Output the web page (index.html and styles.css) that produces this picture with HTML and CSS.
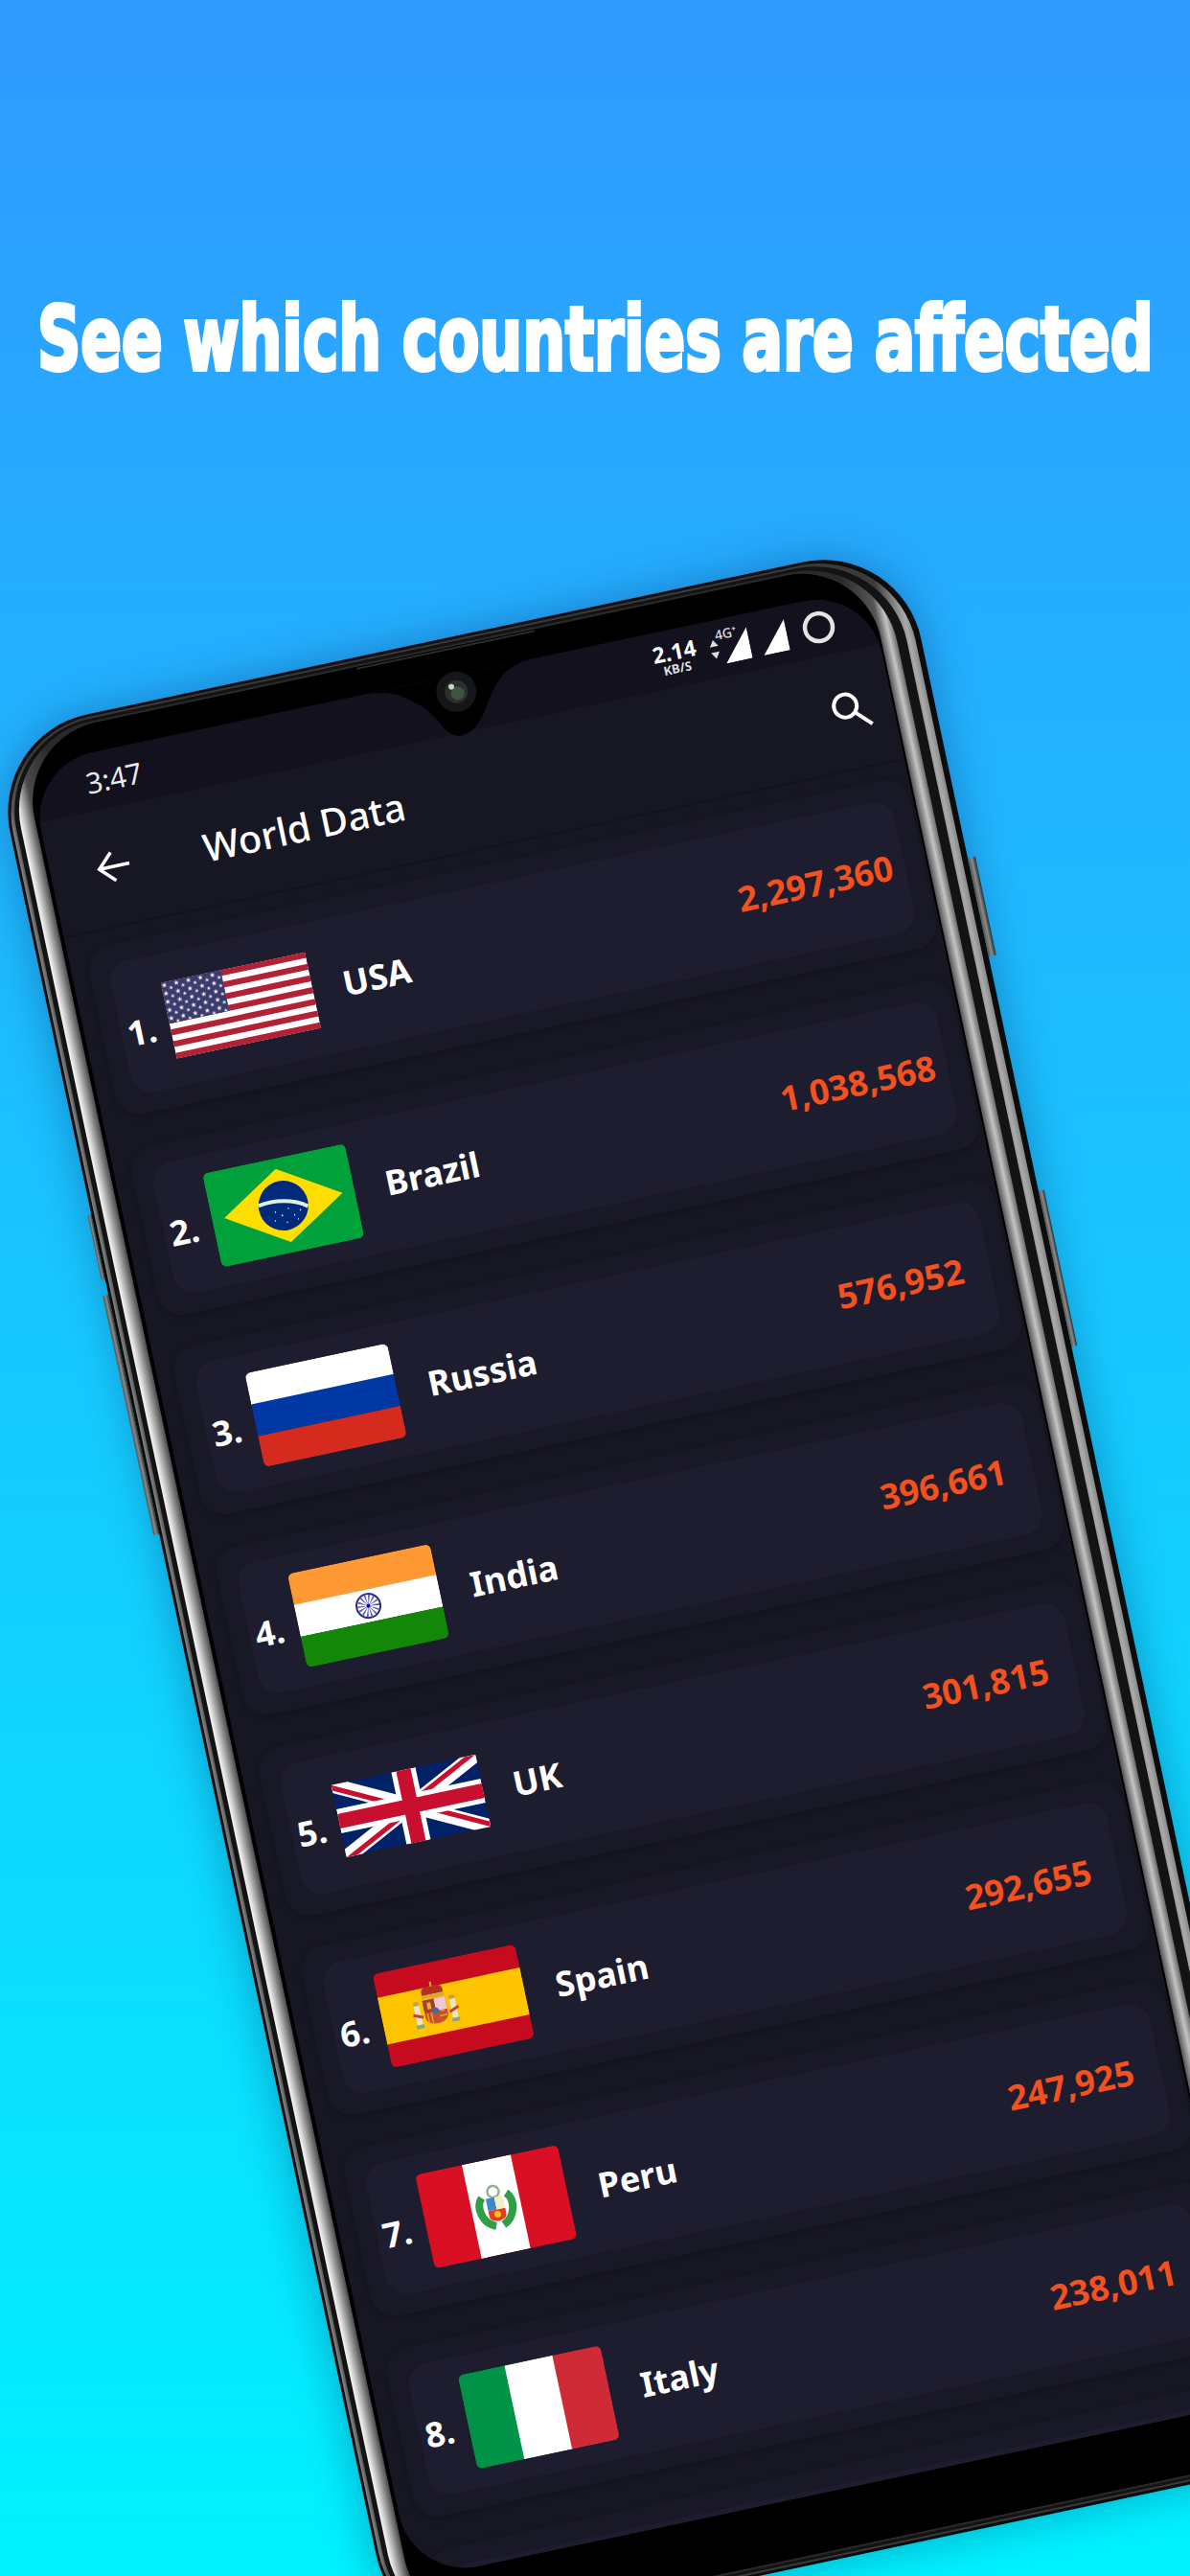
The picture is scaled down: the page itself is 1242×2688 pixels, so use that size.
FILE: index.html
```html
<!DOCTYPE html>
<html lang="en">
<head>
  <meta charset="UTF-8">
  <title>World Data</title>
  <link rel="stylesheet" href="styles.css">
</head>
<body>
  <header class="promo">
    <h1 class="promo-title">See which countries are affected</h1>
  </header>

  <div class="phone">
    <span class="side-btn btn-right-a"></span>
    <span class="side-btn btn-right-b"></span>
    <span class="side-btn btn-left-a"></span>
    <span class="side-btn btn-left-b"></span>
    <span class="speaker"></span>
    <svg class="camera" viewBox="0 0 44 44">
      <circle cx="22" cy="22" r="21" fill="#14161a"/>
      <circle cx="22" cy="22" r="12" fill="#2b2f2d"/>
      <circle cx="23" cy="24" r="7" fill="#3c5440"/>
      <circle cx="18" cy="16" r="3" fill="#c9d3cc"/>
    </svg>
    <div class="ring-steel">
      <div class="ring-dark">
        <div class="ring-chrome">
          <div class="bezel">
            <div class="screen">
              <svg class="notch" viewBox="0 0 196 66"><path d="M0 0C34 0 44 6 66 26C80 41 84 63 98 63C118 63 128 41 142 22C156 5 168 0 196 0Z" fill="#000"/></svg>

              <div class="status-bar">
                <span class="time">3:47</span>
                <div class="status-icons">
                  <div class="speed"><span class="speed-num">2.14</span><span class="speed-unit">KB/S</span></div>
                  <svg class="ic-arrows" viewBox="0 0 10 22"><path d="M5 1L9.500 8H.5ZM5 21L.5 14H9.500Z" fill="#ddd"/></svg>
                  <div class="signal-4g"><span class="label-4g">4G⁺</span><svg viewBox="0 0 28 33"><path d="M28 0V33H0Z" fill="#fff"/></svg></div>
                  <svg class="ic-signal" viewBox="0 0 28 33"><path d="M28 0V33H0Z" fill="#fff"/></svg>
                  <svg class="ic-battery" viewBox="0 0 34 34"><circle cx="17" cy="17" r="14.500" fill="none" stroke="#e4e4e4" stroke-width="4.500"/></svg>
                </div>
              </div>

              <div class="app-bar">
                <svg class="ic-back" viewBox="0 0 36 34"><path d="M35 17H3M18 2L3 17L18 32" fill="none" stroke="#fff" stroke-width="3.500"/></svg>
                <span class="app-title">World Data</span>
                <svg class="ic-search" viewBox="0 0 42 42"><circle cx="16" cy="16" r="12" fill="none" stroke="#fff" stroke-width="4"/><path d="M25 25L40 40" fill="none" stroke="#fff" stroke-width="4"/></svg>
              </div>

              <div class="list">
                <div class="row">
                  <div class="card">
                    <span class="rank">1.</span>
                    <div class="flag">
                      <svg width="154" height="81" viewBox="0 0 154 81">
                        <defs>
                          <pattern id="stars" width="12.800" height="8.800" patternUnits="userSpaceOnUse">
                            <path d="M3.200 .6l.7 1.900h2l-1.600 1.200.6 1.900-1.700-1.100-1.700 1.100.6-1.900L.5 2.500h2zM9.600 5l.6 1.500h1.600l-1.300 1 .5 1.300-1.400-.8-1.400.8.500-1.300-1.300-1h1.600z" fill="#fff"/>
                          </pattern>
                        </defs>
                        <rect width="154" height="81" fill="#fff"/>
                        <path d="M0 0H154V6.200H0ZM0 12.500H154V18.700H0ZM0 24.900H154V31.200H0ZM0 37.400H154V43.600H0ZM0 49.800H154V56.100H0ZM0 62.300H154V68.500H0ZM0 74.800H154V81H0Z" fill="#b22234"/>
                        <rect width="64" height="43.600" fill="#3c3b6e"/>
                        <rect width="64" height="43.600" fill="url(#stars)"/>
                      </svg>
                    </div>
                    <span class="name">USA</span>
                    <span class="cases">2,297,360</span>
                  </div>
                </div>

                <div class="row">
                  <div class="card">
                    <span class="rank">2.</span>
                    <div class="flag">
                      <svg class="flag-round" width="152" height="100" viewBox="0 0 152 100">
                        <rect width="152" height="100" fill="#00a13b"/>
                        <path d="M76 11L139 50L76 89L13 50Z" fill="#fedd00"/>
                        <circle cx="76" cy="50" r="26" fill="#012a7a"/>
                        <path d="M50.500 45C68 42 88 46 101 56" fill="none" stroke="#dfeee0" stroke-width="4"/>
                        <path d="M66 55h1M72 60h1.500M80 54h1M85 62h1M92 58h1M76 68h1M64 64h1M88 67h1" stroke="#fff" stroke-width="1.500"/>
                      </svg>
                    </div>
                    <span class="name">Brazil</span>
                    <span class="cases">1,038,568</span>
                  </div>
                </div>

                <div class="row">
                  <div class="card">
                    <span class="rank">3.</span>
                    <div class="flag">
                      <svg class="flag-round" width="152" height="100" viewBox="0 0 152 100">
                        <rect width="152" height="34" fill="#fff"/>
                        <rect y="33" width="152" height="34" fill="#0039a6"/>
                        <rect y="67" width="152" height="33" fill="#d52b1e"/>
                      </svg>
                    </div>
                    <span class="name">Russia</span>
                    <span class="cases">576,952</span>
                  </div>
                </div>

                <div class="row">
                  <div class="card">
                    <span class="rank">4.</span>
                    <div class="flag">
                      <svg class="flag-round" width="152" height="100" viewBox="0 0 152 100">
                        <rect width="152" height="34" fill="#ff9933"/>
                        <rect y="33" width="152" height="34" fill="#fff"/>
                        <rect y="67" width="152" height="33" fill="#138808"/>
                        <circle cx="76" cy="50" r="12.500" fill="none" stroke="#2a2a8c" stroke-width="2"/>
                        <circle cx="76" cy="50" r="6" fill="none" stroke="#5a5ab0" stroke-width="11" stroke-dasharray="1 1.600"/>
                        <circle cx="76" cy="50" r="2" fill="#000080"/>
                      </svg>
                    </div>
                    <span class="name">India</span>
                    <span class="cases">396,661</span>
                  </div>
                </div>

                <div class="row">
                  <div class="card">
                    <span class="rank">5.</span>
                    <div class="flag">
                      <svg width="154" height="77" viewBox="0 0 60 30">
                        <defs>
                          <clipPath id="pinwheel"><path d="M30 15h30v15zv15H0zH0V0zV0h30z"/></clipPath>
                        </defs>
                        <rect width="60" height="30" fill="#012169"/>
                        <path d="M0 0L60 30M60 0L0 30" stroke="#fff" stroke-width="6"/>
                        <path d="M0 0L60 30M60 0L0 30" stroke="#c8102e" stroke-width="4" clip-path="url(#pinwheel)"/>
                        <path d="M30 0V30M0 15H60" stroke="#fff" stroke-width="10"/>
                        <path d="M30 0V30M0 15H60" stroke="#c8102e" stroke-width="6"/>
                      </svg>
                    </div>
                    <span class="name">UK</span>
                    <span class="cases">301,815</span>
                  </div>
                </div>

                <div class="row">
                  <div class="card">
                    <span class="rank">6.</span>
                    <div class="flag">
                      <svg class="flag-round" width="152" height="100" viewBox="0 0 152 100">
                        <rect width="152" height="100" fill="#c60b1e"/>
                        <rect y="25" width="152" height="50" fill="#ffc400"/>
                        <path d="M35 42h6v23h-6zM73 42h6v23h-6z" fill="#e8e6c8"/>
                        <path d="M34 62h8v4h-8zM72 62h8v4h-8z" fill="#8aa870"/>
                        <path d="M35 38h6v4h-6zM73 38h6v4h-6z" fill="#c9a33a"/>
                        <path d="M33 51l10 4M81 51l-10 4" stroke="#c8402a" stroke-width="3"/>
                        <path d="M46 33C44 25 50 24 57 24C64 24 70 25 68 33Z" fill="#b5301f"/>
                        <path d="M45 33h24v4H45zM56 20h2v5h-2z" fill="#d8a93a"/>
                        <path d="M45 38H69V56C69 67 45 67 45 56Z" fill="#c8502a"/>
                        <rect x="57" y="38" width="12" height="13" fill="#f0c8d8"/>
                        <rect x="45" y="38" width="12" height="13" fill="#a5402a"/>
                        <path d="M49 41h4v7h-4z" fill="#d8b24a"/>
                        <path d="M48 52v11M52 52v12M62 52h4M60 57h8" stroke="#e6a020" stroke-width="1.500"/>
                        <circle cx="57" cy="51" r="3.500" fill="#4a6a9a"/>
                      </svg>
                    </div>
                    <span class="name">Spain</span>
                    <span class="cases">292,655</span>
                  </div>
                </div>

                <div class="row">
                  <div class="card">
                    <span class="rank">7.</span>
                    <div class="flag">
                      <svg class="flag-round" width="152" height="100" viewBox="0 0 152 100">
                        <rect width="152" height="100" fill="#d91023"/>
                        <rect x="50" width="52" height="100" fill="#fff"/>
                        <path d="M63 38C55 46 58 64 72 70M89 38C97 46 94 64 80 70" fill="none" stroke="#2f9e44" stroke-width="8"/>
                        <circle cx="76" cy="34" r="6" fill="none" stroke="#8fb48f" stroke-width="2.500"/>
                        <rect x="67" y="40" width="9" height="13" fill="#3f88c5"/>
                        <rect x="76" y="40" width="9" height="13" fill="#f1efc8"/>
                        <path d="M67 53H85V59C85 67 67 67 67 59Z" fill="#e63b1f"/>
                        <circle cx="76" cy="58" r="3.500" fill="#f6c521"/>
                      </svg>
                    </div>
                    <span class="name">Peru</span>
                    <span class="cases">247,925</span>
                  </div>
                </div>

                <div class="row">
                  <div class="card">
                    <span class="rank">8.</span>
                    <div class="flag">
                      <svg class="flag-round" width="152" height="100" viewBox="0 0 152 100">
                        <rect width="51" height="100" fill="#009246"/>
                        <rect x="50" width="52" height="100" fill="#fff"/>
                        <rect x="101" width="51" height="100" fill="#ce2b37"/>
                      </svg>
                    </div>
                    <span class="name">Italy</span>
                    <span class="cases">238,011</span>
                  </div>
                </div>

                <div class="row">
                  <div class="card"></div>
                </div>
              </div>
            </div>
          </div>
        </div>
      </div>
    </div>
  </div>
</body>
</html>
```

FILE: styles.css
```css
* {
  box-sizing: border-box;
  margin: 0;
  padding: 0;
}

html, body {
  width: 1242px;
  height: 2688px;
  overflow: hidden;
}

body {
  background: linear-gradient(180deg, #3099ff 0%, #00f2ff 100%);
  font-family: 'Noto Sans', sans-serif;
  color: #fff;
}

/* headline */
.promo {
  display: flex;
  justify-content: center;
  height: 767px;
  padding-top: 300px;
}

.promo-title {
  flex: none;
  height: 110px;
  font-family: 'DejaVu Sans Condensed', 'DejaVu Sans', sans-serif;
  font-size: 92px;
  font-weight: 700;
  line-height: 110px;
  white-space: nowrap;
  -webkit-text-stroke: 4px #fff;
  transform: scaleX(0.76);
}

/* phone body, tilted as a whole */
.phone {
  position: relative;
  width: 972px;
  height: 2046px;
  margin-left: -11px;
  padding: 3px 6px 3px 3px;
  background: #0c0c0c;
  border-radius: 104px;
  box-shadow: 0 0 46px rgba(0, 30, 80, 0.35);
  transform-origin: 0 0;
  transform: rotate(-12deg);
}

.ring-steel {
  height: 100%;
  padding: 2px 9px 2px 4px;
  background: linear-gradient(90deg, #8a8a8a 0, #555 4px, #3a3a3a 30px, #3a3a3a calc(100% - 30px), #aaa calc(100% - 6px), #888 100%);
  border-radius: 102px;
}

.ring-dark {
  height: 100%;
  padding: 3px 10px 3px 5px;
  background: #131313;
  border-radius: 98px;
}

.ring-chrome {
  height: 100%;
  padding: 2px 16px;
  background: linear-gradient(90deg, #f6f6f6 0, #ddd 3px, #8c8c8c 10px, #4a4a4a 16px, #2a2a2a 44px, #2a2a2a calc(100% - 44px), #555 calc(100% - 16px), #c4c4c4 calc(100% - 7px), #6a6a6a 100%);
  border-radius: 94px;
}

.bezel {
  height: 100%;
  padding: 30px 2px 61px 4px;
  background: #000;
  border-radius: 84px;
}

.screen {
  position: relative;
  display: flex;
  flex-direction: column;
  height: 100%;
  overflow: hidden;
  background: #171723;
  border-radius: 70px;
}

.speaker {
  position: absolute;
  top: 11px;
  left: 389px;
  z-index: 1;
  width: 190px;
  height: 2px;
  background: #2c2c2c;
}

.side-btn {
  position: absolute;
  background: linear-gradient(90deg, #555, #8a8a8a 50%, #2c2c2c);
}

.btn-right-a { top: 338px; right: -8px; width: 8px; height: 105px; }
.btn-right-b { top: 693px; right: -6px; width: 6px; height: 166px; }
.btn-left-a { top: 511px; left: -4px; width: 4px; height: 70px; }
.btn-left-b { top: 597px; left: -6px; width: 6px; height: 255px; }

.notch {
  position: absolute;
  top: 0;
  left: 351px;
  z-index: 2;
  width: 196px;
  height: 66px;
}

.camera {
  position: absolute;
  top: 35px;
  left: 464px;
  z-index: 3;
  width: 44px;
  height: 44px;
}

/* status bar */
.status-bar {
  display: flex;
  align-items: center;
  justify-content: space-between;
  flex: none;
  height: 60px;
  padding: 0 42px 0 56px;
  background: #12111d;
}

.time {
  font-size: 30px;
  color: #e8e8e8;
}

.status-icons {
  display: flex;
  align-items: center;
}

.speed {
  display: flex;
  flex-direction: column;
  align-items: center;
  line-height: 1;
  font-weight: 700;
}

.speed-num { font-size: 23px; }
.speed-unit { font-size: 13px; color: #ddd; }

.ic-arrows {
  width: 10px;
  height: 22px;
  margin-left: 14px;
}

.signal-4g {
  position: relative;
  width: 28px;
  height: 33px;
  margin-left: 4px;
}

.signal-4g svg {
  display: block;
  width: 28px;
  height: 33px;
}

.label-4g {
  position: absolute;
  top: -8px;
  left: -6px;
  font-size: 14px;
  font-weight: 500;
  color: #ddd;
}

.ic-signal {
  width: 28px;
  height: 33px;
  margin-left: 12px;
}

.ic-battery {
  width: 34px;
  height: 34px;
  margin-left: 17px;
  margin-bottom: 1px;
}

/* app bar */
.app-bar {
  display: flex;
  align-items: center;
  flex: none;
  height: 124px;
  padding: 0 23px 0 48px;
  border-bottom: 2px solid #13131e;
}

.ic-back {
  width: 36px;
  height: 34px;
}

.app-title {
  margin-left: 78px;
  font-size: 40px;
  font-weight: 500;
}

.ic-search {
  width: 42px;
  height: 42px;
  margin-left: auto;
}

/* country list */
.list {
  display: flex;
  flex-direction: column;
  gap: 33.700px;
  padding: 16px 3px 0 18px;
}

.row {
  flex: none;
  padding: 20px;
  background: #191827;
  border-radius: 26px;
  box-shadow: 0 2px 5px rgba(12, 12, 20, 0.4);
}

.card {
  display: flex;
  align-items: center;
  height: 140px;
  padding: 0 9px 0 6px;
  background: #1e1d2f;
  border-radius: 22px;
}

.rank {
  flex: none;
  width: 32px;
  margin-top: 10px;
  margin-right: 14px;
  font-size: 36px;
  font-weight: 700;
}

.flag {
  display: flex;
  align-items: center;
  justify-content: center;
  flex: none;
  width: 152px;
  height: 100px;
}

.flag svg {
  display: block;
  flex: none;
}

.flag-round {
  border-radius: 6px;
}

.name {
  margin-left: 33px;
  font-size: 36px;
  font-weight: 700;
}

.cases {
  flex: none;
  width: 172px;
  margin-left: auto;
  font-size: 36px;
  font-weight: 700;
  text-align: center;
  white-space: nowrap;
  color: #f4511e;
}
```
